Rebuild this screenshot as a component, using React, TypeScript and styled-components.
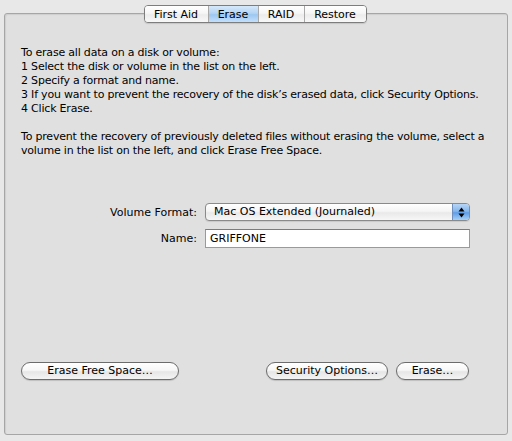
import React from "react";
import styled, { createGlobalStyle } from "styled-components";

const Global = createGlobalStyle`
  html, body { margin: 0; padding: 0; background: #e8e8e8; }
  body { font-family: "DejaVu Sans", "Liberation Sans", sans-serif; font-size: 11px; color: #000; }
`;

const Window = styled.div`
  width: 512px;
  height: 441px;
  box-sizing: border-box;
  padding: 5px 4px 0 4px;
  display: flex;
  flex-direction: column;
`;

const TabBar = styled.div`
  display: flex;
  justify-content: center;
  position: relative;
  z-index: 1;
  margin-bottom: -10px;
  padding-left: 1px;
  padding-right: 3px;
`;

const TabGroup = styled.div`
  display: flex;
  border: 1px solid #7d7d7d;
  border-radius: 4px;
  overflow: hidden;
  box-shadow: 0 1px 1px rgba(0, 0, 0, 0.12);
`;

const Tab = styled.div<{ $active?: boolean; $w: number }>`
  width: ${(p) => p.$w}px;
  height: 16px;
  display: flex;
  align-items: center;
  justify-content: center;
  font-size: 11px;
  border-left: 1px solid #a9a9a9;
  &:first-child { border-left: none; }
  background: ${(p) =>
    p.$active
      ? "linear-gradient(#d6e9fb 0%, #b4d4f4 45%, #9cc7f2 55%, #c3e0fb 100%)"
      : "linear-gradient(#ffffff 0%, #f6f6f6 45%, #ececec 55%, #f8f8f8 100%)"};
`;

const Panel = styled.div`
  height: 422px;
  box-sizing: border-box;
  background: #e0e0e0;
  border: 1px solid #a6a6a6;
  border-radius: 3px;
  box-shadow: inset 1px 1px 1px rgba(0, 0, 0, 0.08);
  padding: 32px 16px 0 16px;
  display: flex;
  flex-direction: column;
`;

const Text = styled.p`
  margin: 0;
  line-height: 14px;
  font-size: 11px;
  letter-spacing: -0.2px;
  & + & { margin-top: 14px; }
`;

const Form = styled.div`
  margin-top: 45px;
  display: grid;
  grid-template-columns: 176px 265px;
  column-gap: 8px;
  row-gap: 8px;
  align-items: center;
`;

const Label = styled.label`
  text-align: right;
  font-size: 11px;
`;

const Popup = styled.div`
  height: 18px;
  box-sizing: border-box;
  border: 1px solid #8a8a8a;
  border-radius: 4px;
  display: flex;
  overflow: hidden;
  background: linear-gradient(#ffffff 0%, #f5f5f5 45%, #e9e9e9 55%, #f7f7f7 100%);
  box-shadow: 0 1px 1px rgba(0, 0, 0, 0.1);
`;

const PopupText = styled.span`
  flex: 1;
  padding-left: 8px;
  line-height: 16px;
  font-size: 11px;
`;

const PopupArrows = styled.span`
  width: 16px;
  border-left: 1px solid #6f8fbf;
  background: linear-gradient(#b7d6f7 0%, #86b6ec 45%, #5f9de6 55%, #a6d1f7 100%);
  display: flex;
  align-items: center;
  justify-content: center;
`;

const Field = styled.input`
  height: 19px;
  box-sizing: border-box;
  border: 1px solid #9a9a9a;
  border-top-color: #7c7c7c;
  background: #fff;
  font-family: inherit;
  font-size: 11px;
  padding: 0 0 0 4px;
  margin: 0;
  outline: none;
  color: #000;
`;

const ButtonRow = styled.div`
  margin-top: 114px;
  display: flex;
  padding: 0 22px 0 0;
`;

const Button = styled.button<{ $w: number; $gap?: number }>`
  width: ${(p) => p.$w}px;
  height: 18px;
  margin-left: ${(p) => p.$gap ?? 0}px;
  box-sizing: border-box;
  border: 1px solid #6c6c6c;
  border-radius: 9px;
  background: linear-gradient(#ffffff 0%, #f7f7f7 45%, #e6e6e6 55%, #f4f4f4 100%);
  box-shadow: 0 1px 1px rgba(0, 0, 0, 0.15);
  font-family: inherit;
  font-size: 11px;
  color: #000;
  padding: 0;
  line-height: 16px;
`;

const Spacer = styled.div`
  flex: 1;
`;

export default function App() {
  return (
    <>
      <Global />
      <Window>
        <TabBar>
          <TabGroup>
            <Tab $w={63}>First Aid</Tab>
            <Tab $w={49} $active>Erase</Tab>
            <Tab $w={45}>RAID</Tab>
            <Tab $w={61}>Restore</Tab>
          </TabGroup>
        </TabBar>
        <Panel>
          <Text>
            To erase all data on a disk or volume:
            <br />1 Select the disk or volume in the list on the left.
            <br />2 Specify a format and name.
            <br />3 If you want to prevent the recovery of the disk’s erased data, click Security Options.
            <br />4 Click Erase.
          </Text>
          <Text>
            To prevent the recovery of previously deleted files without erasing the volume, select a
            <br />volume in the list on the left, and click Erase Free Space.
          </Text>
          <Form>
            <Label>Volume Format:</Label>
            <Popup>
              <PopupText>Mac OS Extended (Journaled)</PopupText>
              <PopupArrows>
                <svg width="7" height="11" viewBox="0 0 7 11">
                  <path d="M3.5 0.5 L6.5 4.5 L0.5 4.5 Z" fill="#000" />
                  <path d="M3.5 10.5 L6.5 6.5 L0.5 6.5 Z" fill="#000" />
                </svg>
              </PopupArrows>
            </Popup>
            <Label>Name:</Label>
            <Field defaultValue="GRIFFONE" />
          </Form>
          <ButtonRow>
            <Button $w={158}>Erase Free Space…</Button>
            <Spacer />
            <Button $w={122}>Security Options…</Button>
            <Button $w={73} $gap={8}>Erase…</Button>
          </ButtonRow>
        </Panel>
      </Window>
    </>
  );
}
